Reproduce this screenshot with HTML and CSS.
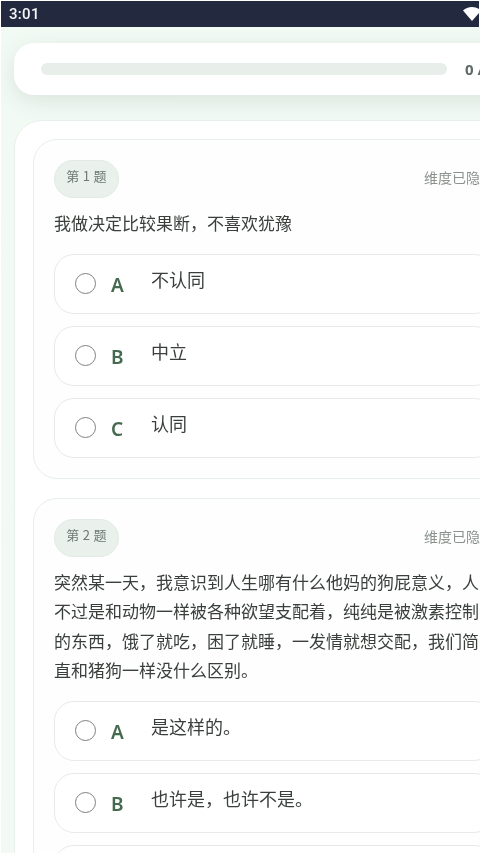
FILE: index.html
```html
<!DOCTYPE html>
<html lang="zh">
<head>
<meta charset="utf-8">
<title>测评</title>
<link rel="stylesheet" href="styles.css">
</head>
<body>
<div class="screen">
  <header class="status">
    <span class="time">3:01</span>
    <svg class="wifi" viewBox="0 0 18 14" width="18" height="14"><path d="M9 14 0 3.600C2.400 1.400 5.500 0 9 0s6.600 1.400 9 3.600z" fill="#fff"/></svg>
  </header>
  <main class="page">
    <section class="progress-card">
      <div class="track"></div>
      <span class="count">0 / 60</span>
    </section>
    <section class="list">
      <article class="question">
        <div class="q-head"><span class="chip">第 1 题</span><span class="hint">维度已隐藏</span></div>
        <p class="q-text">我做决定比较果断，不喜欢犹豫</p>
        <div class="options">
          <div class="option"><span class="radio"></span><span class="letter">A</span><span class="opt-text">不认同</span></div>
          <div class="option"><span class="radio"></span><span class="letter">B</span><span class="opt-text">中立</span></div>
          <div class="option"><span class="radio"></span><span class="letter">C</span><span class="opt-text">认同</span></div>
        </div>
      </article>
      <article class="question">
        <div class="q-head"><span class="chip">第 2 题</span><span class="hint">维度已隐藏</span></div>
        <p class="q-text">突然某一天，我意识到人生哪有什么他妈的狗屁意义，人不过是和动物一样被各种欲望支配着，纯纯是被激素控制的东西，饿了就吃，困了就睡，一发情就想交配，我们简直和猪狗一样没什么区别。</p>
        <div class="options">
          <div class="option"><span class="radio"></span><span class="letter">A</span><span class="opt-text">是这样的。</span></div>
          <div class="option"><span class="radio"></span><span class="letter">B</span><span class="opt-text">也许是，也许不是。</span></div>
          <div class="option"><span class="radio"></span><span class="letter">C</span><span class="opt-text">不是这样的。</span></div>
        </div>
      </article>
    </section>
  </main>
</div>
</body>
</html>
```
FILE: styles.css
```css
* { box-sizing: border-box; }
html, body { margin: 0; height: 100%; overflow: hidden; background: #fff; }
body { font-family: "Noto Sans CJK SC", "Noto Sans", sans-serif; }
.screen { width: 480px; height: 854px; padding: 1px; overflow: hidden; background: #fff; filter: blur(.35px); }
.status {
  height: 26px; background: #232a3f; color: #f4f5f7;
  display: flex; align-items: center; justify-content: space-between;
  padding: 0 0 0 8px; overflow: hidden;
}
.time { font: 500 15px/1 Roboto, sans-serif; letter-spacing: .3px; }
.wifi { flex: none; margin: 0 -2px 0 0; }
.page {
  width: 540px; height: 826px; padding: 16px 0 0 13px; overflow: hidden;
  background: linear-gradient(160deg, #f2faf4 0%, #f3f9f5 100%);
}
.progress-card {
  width: 520px; height: 52px; background: #fff; border-radius: 20px;
  display: flex; align-items: center; gap: 18px; padding: 0 27px;
  box-shadow: 0 6px 22px rgba(70, 105, 85, .14);
}
.track { width: 406px; height: 12px; border-radius: 6px; background: #e8eeea; flex: none; }
.count { font: 700 15px/1 "Noto Sans", sans-serif; color: #5f6b64; white-space: nowrap; }
.list {
  margin-top: 25px; width: 520px; padding: 18px 18px 0;
  background: #fff; border: 1px solid #e9f0eb; border-radius: 28px 28px 0 0;
  display: flex; flex-direction: column; gap: 19px;
}
.question {
  background: #fdfefd; border: 1px solid #e8efea; border-radius: 24px;
  padding: 20px;
}
.q-head { display: flex; align-items: center; justify-content: space-between; height: 38px; }
.chip {
  width: 65px; height: 38px; border-radius: 19px; background: #eaf1ec; border: 1px solid #e1ebe4;
  color: #6e7872; font-size: 13px; letter-spacing: .3px; line-height: 30px; text-align: center; white-space: nowrap;
  padding-bottom: 4px;
}
.hint { color: #8b928e; font-size: 14px; line-height: 34px; padding-bottom: 4px; }
.q-text { margin: 10px 0 16px; width: 440px; color: #3a3f3c; font-size: 17px; line-height: 29.5px; }
.options { display: flex; flex-direction: column; gap: 12px; }
.option {
  height: 60px; background: #fff; border: 1px solid #e6ebe8; border-radius: 20px;
  display: flex; align-items: center; padding: 0 0 0 20px;
}
.radio { width: 21px; height: 21px; border: 1.5px solid #7f8281; border-radius: 50%; flex: none; margin-right: 15px; }
.letter { width: 40px; flex: none; font: 600 19px/24px "Noto Sans", sans-serif; color: #466a50; padding-top: 2px; }
.opt-text { color: #3a3f3c; font-size: 18px; line-height: 24px; padding-bottom: 10px; }
```
